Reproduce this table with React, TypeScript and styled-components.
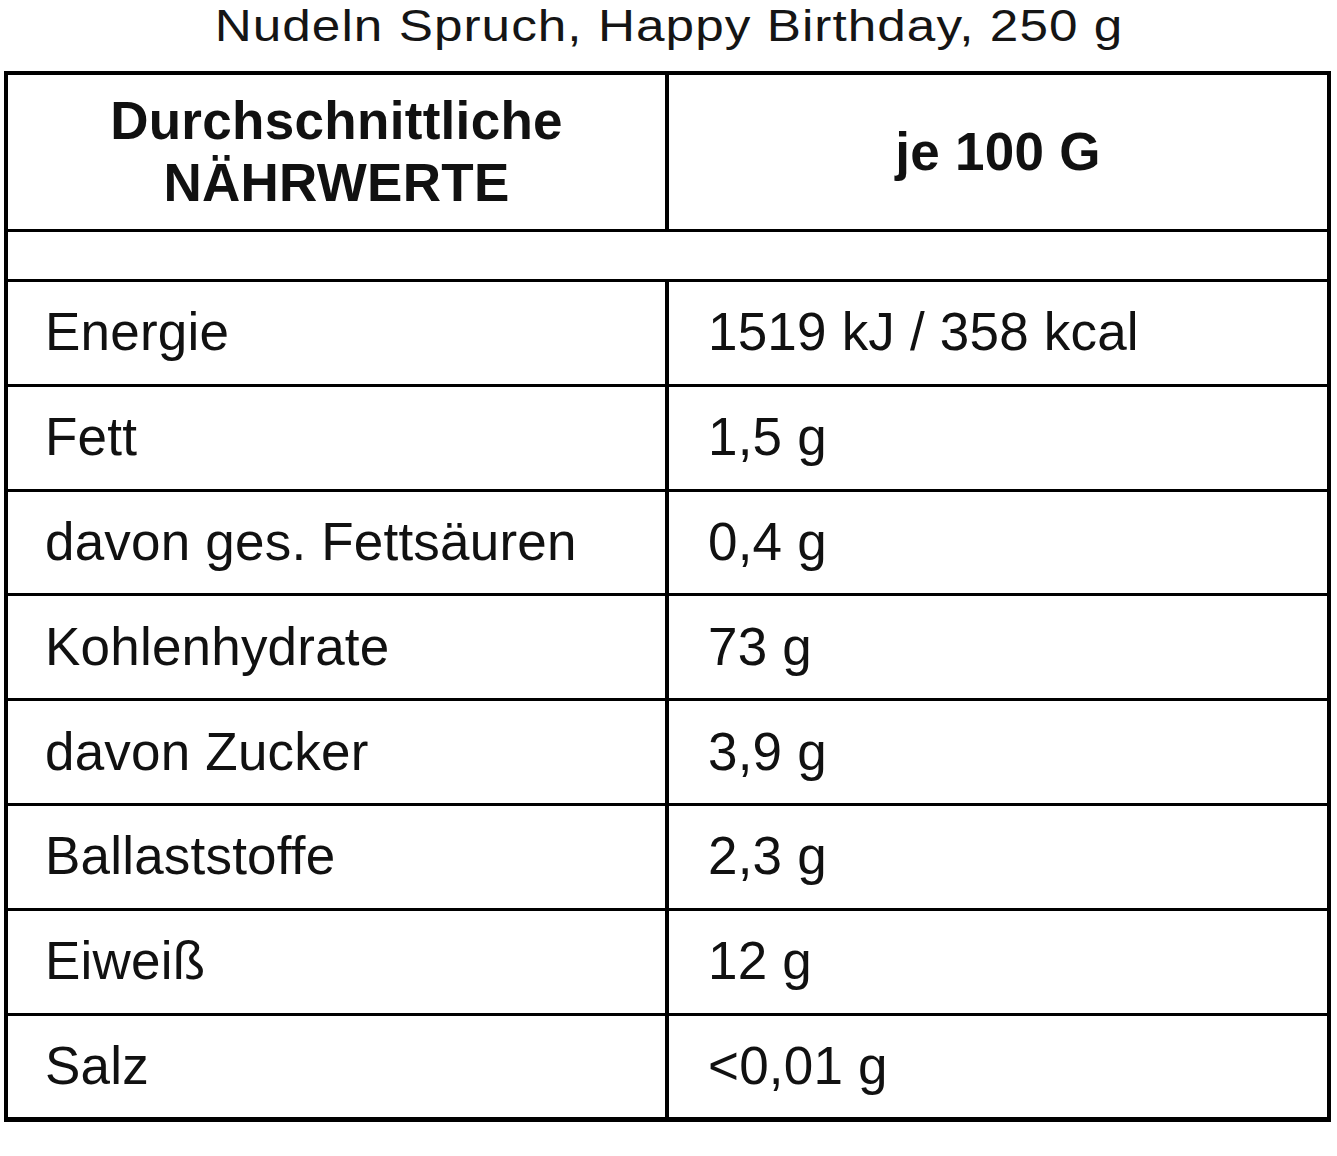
import React from "react";
import styled, { createGlobalStyle } from "styled-components";

const GlobalStyle = createGlobalStyle`
  html, body {
    margin: 0;
    padding: 0;
    background: #ffffff;
  }
  body {
    font-family: "Liberation Sans", Arial, Helvetica, sans-serif;
    color: #111111;
  }
`;

const Page = styled.div`
  width: 1337px;
  padding: 0 0 0 4px;
  box-sizing: border-box;
`;

const TitleRow = styled.div`
  width: 1327px;
  display: flex;
  justify-content: center;
  padding: 0 0 0 4px;
  box-sizing: border-box;
  margin: 0 0 20px 0;
`;

const Title = styled.h1`
  margin: 0;
  font-size: 44px;
  line-height: 51px;
  font-weight: 400;
  letter-spacing: 0.9px;
  white-space: nowrap;
  transform: scaleX(1.165);
  transform-origin: 50% 50%;
  color: #151515;
`;

const Grid = styled.div`
  width: 1327px;
  box-sizing: border-box;
  display: grid;
  grid-template-columns: 657px 658px;
  grid-template-rows: 154px 47px repeat(8, 101.8px);
  column-gap: 4px;
  row-gap: 3px;
  padding: 4px 4px 5px 4px;
  background: #000000;
`;

const Cell = styled.div<{ $head?: boolean; $center?: boolean; $span?: boolean; $value?: boolean }>`
  background: #ffffff;
  display: flex;
  align-items: center;
  justify-content: ${(p) => (p.$center ? "center" : "flex-start")};
  text-align: ${(p) => (p.$center ? "center" : "left")};
  padding: ${(p) => (p.$center ? "0" : p.$value ? "0 0 0 39px" : "0 0 0 37px")};
  font-size: 53px;
  letter-spacing: ${(p) => (p.$head ? "0.3px" : "0.2px")};
  line-height: ${(p) => (p.$head ? "62px" : "1.15")};
  font-weight: ${(p) => (p.$head ? 700 : 400)};
  grid-column: ${(p) => (p.$span ? "1 / span 2" : "auto")};
  color: #111111;
  white-space: nowrap;
`;

const rows: [string, string][] = [
  ["Energie", "1519 kJ / 358 kcal"],
  ["Fett", "1,5 g"],
  ["davon ges. Fettsäuren", "0,4 g"],
  ["Kohlenhydrate", "73 g"],
  ["davon Zucker", "3,9 g"],
  ["Ballaststoffe", "2,3 g"],
  ["Eiweiß", "12 g"],
  ["Salz", "<0,01 g"],
];

export default function App() {
  return (
    <Page>
      <GlobalStyle />
      <TitleRow>
        <Title>Nudeln Spruch, Happy Birthday, 250 g</Title>
      </TitleRow>
      <Grid>
        <Cell $head $center>
          Durchschnittliche
          <br />
          NÄHRWERTE
        </Cell>
        <Cell $head $center>
          je 100 G
        </Cell>
        <Cell $span />
        {rows.map(([label, value]) => (
          <React.Fragment key={label}>
            <Cell>{label}</Cell>
            <Cell $value>{value}</Cell>
          </React.Fragment>
        ))}
      </Grid>
    </Page>
  );
}
